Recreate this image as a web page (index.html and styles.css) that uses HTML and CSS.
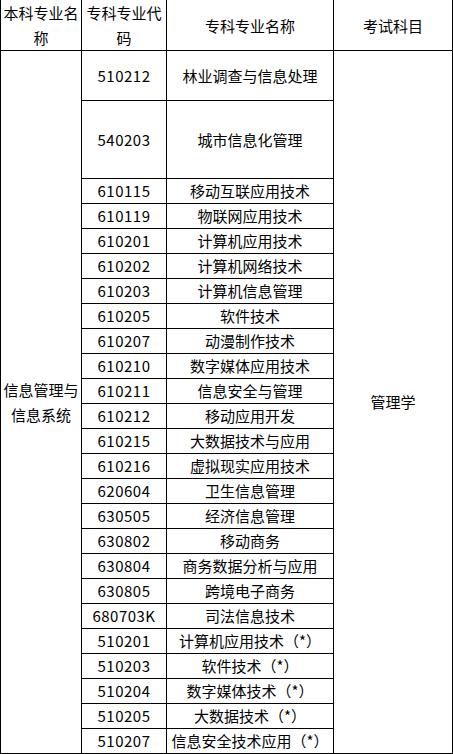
FILE: index.html
```html
<!DOCTYPE html>
<html lang="zh-CN">
<head>
<meta charset="utf-8">
<link rel="stylesheet" href="styles.css">
</head>
<body>
<table class="grid">
  <colgroup>
    <col class="c1"><col class="c2"><col class="c3"><col class="c4">
  </colgroup>
  <thead>
    <tr class="head">
      <th>本科专业名称</th>
      <th>专科专业代码</th>
      <th>专科专业名称</th>
      <th>考试科目</th>
    </tr>
  </thead>
  <tbody>
    <tr class="r50">
      <td class="major" rowspan="25">信息管理与<br>信息系统</td>
      <td class="code">510212</td>
      <td>林业调查与信息处理</td>
      <td class="subject" rowspan="25">管理学</td>
    </tr>
    <tr class="r78"><td class="code">540203</td><td>城市信息化管理</td></tr>
    <tr><td class="code">610115</td><td>移动互联应用技术</td></tr>
    <tr><td class="code">610119</td><td>物联网应用技术</td></tr>
    <tr><td class="code">610201</td><td>计算机应用技术</td></tr>
    <tr><td class="code">610202</td><td>计算机网络技术</td></tr>
    <tr><td class="code">610203</td><td>计算机信息管理</td></tr>
    <tr><td class="code">610205</td><td>软件技术</td></tr>
    <tr><td class="code">610207</td><td>动漫制作技术</td></tr>
    <tr><td class="code">610210</td><td>数字媒体应用技术</td></tr>
    <tr><td class="code">610211</td><td>信息安全与管理</td></tr>
    <tr><td class="code">610212</td><td>移动应用开发</td></tr>
    <tr><td class="code">610215</td><td>大数据技术与应用</td></tr>
    <tr><td class="code">610216</td><td>虚拟现实应用技术</td></tr>
    <tr><td class="code">620604</td><td>卫生信息管理</td></tr>
    <tr><td class="code">630505</td><td>经济信息管理</td></tr>
    <tr><td class="code">630802</td><td>移动商务</td></tr>
    <tr><td class="code">630804</td><td>商务数据分析与应用</td></tr>
    <tr><td class="code">630805</td><td>跨境电子商务</td></tr>
    <tr><td class="code">680703K</td><td>司法信息技术</td></tr>
    <tr><td class="code">510201</td><td>计算机应用技术（*）</td></tr>
    <tr><td class="code">510203</td><td>软件技术（*）</td></tr>
    <tr><td class="code">510204</td><td>数字媒体技术（*）</td></tr>
    <tr><td class="code">510205</td><td>大数据技术（*）</td></tr>
    <tr><td class="code">510207</td><td>信息安全技术应用（*）</td></tr>
  </tbody>
</table>
</body>
</html>
```
FILE: styles.css
```css
html, body {
  margin: 0;
  padding: 0;
  background: #fff;
}
body {
  font-family: "Noto Sans CJK SC", "Noto Sans", sans-serif;
  font-size: 15px;
  color: #000;
}
.grid {
  border-collapse: collapse;
  table-layout: fixed;
  width: 452px;
  margin-top: -1px;
}
.c1 { width: 81px; }
.c2 { width: 85px; }
.c3 { width: 167px; }
.c4 { width: 119px; }
.grid th,
.grid td {
  border: 1px solid #000;
  padding: 0 2px;
  text-align: center;
  vertical-align: middle;
  font-weight: normal;
  line-height: 24px;
  height: 24px;
}
.grid .head th {
  line-height: 25px;
  height: 49px;
}
.grid .r50 td { height: 49px; }
.grid .r78 td { height: 77px; }
.grid .code { letter-spacing: 0.5px; }
.grid td.major {
  line-height: 25px;
  height: auto;
}
.grid td.subject { height: auto; }
```
